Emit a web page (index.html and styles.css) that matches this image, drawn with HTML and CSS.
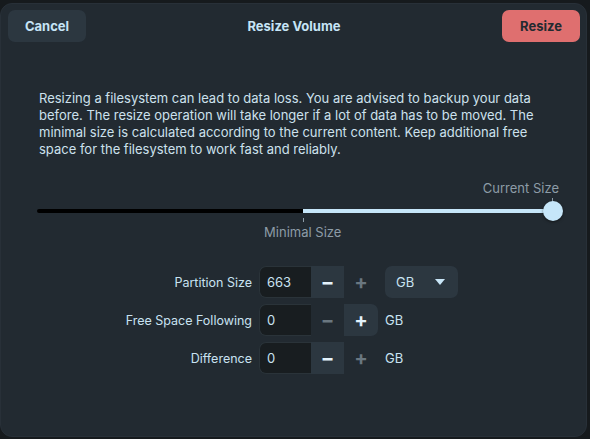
FILE: index.html
```html
<!DOCTYPE html>
<html lang="en">
<head>
  <meta charset="UTF-8" />
  <meta name="viewport" content="width=device-width, initial-scale=1.0"/>
  <title>Resize Volume</title>
  <link rel="stylesheet" href="styles.css">
</head>
<body>
  <div class="dialog">
    <header class="titlebar">
      <button class="btn cancel-btn">Cancel</button>
      <h1>Resize Volume</h1>
      <button class="btn resize-btn">Resize</button>
    </header>

    <p class="warning">Resizing a filesystem can lead to data loss. You are advised to backup your data before. The resize operation will take longer if a lot of data has to be moved. The minimal size is calculated according to the current content. Keep additional free space for the filesystem to work fast and reliably.</p>

    <div class="slider-area">
      <div class="current-label">Current Size</div>
      <div class="slider">
        <div class="track-low" style="width: 51.5%"></div>
        <div class="track-high"></div>
        <span class="tick tick-current"></span>
        <span class="knob"></span>
        <span class="tick tick-min" style="left: 51.5%"></span>
      </div>
      <div class="min-row">
        <span class="min-label" style="left: 51.5%">Minimal Size</span>
      </div>
    </div>

    <div class="size-form">
      <label>Partition Size</label>
      <div class="spin">
        <span class="spin-value">663</span>
        <span class="spin-btn active">&minus;</span>
        <span class="spin-btn">+</span>
      </div>
      <div class="dropdown">
        <span>GB</span>
        <span class="arrow"></span>
      </div>

      <label>Free Space Following</label>
      <div class="spin">
        <span class="spin-value">0</span>
        <span class="spin-btn">&minus;</span>
        <span class="spin-btn active">+</span>
      </div>
      <span class="unit">GB</span>

      <label>Difference</label>
      <div class="spin">
        <span class="spin-value">0</span>
        <span class="spin-btn active">&minus;</span>
        <span class="spin-btn">+</span>
      </div>
      <span class="unit">GB</span>
    </div>
  </div>
</body>
</html>
```

FILE: styles.css
```css
body {
  margin: 0;
  padding: 0;
  background-color: #161a1d;
  font-family: Inter, "Noto Sans", sans-serif;
  color: #c9e2f1;
}
.dialog {
  width: 585px;
  height: 432px;
  margin-top: 3px;
  background-color: #222a31;
  border: 1px solid #283038;
  border-radius: 12px;
  overflow: hidden;
}
.titlebar {
  display: flex;
  align-items: center;
  justify-content: space-between;
  padding: 6px 6px 0 7px;
}
.titlebar h1 {
  margin: 0;
  font-size: 13px;
  font-weight: 700;
  color: #c6e4f6;
}
.btn {
  width: 78px;
  height: 32px;
  border: none;
  border-radius: 7px;
  font-family: Inter, "Noto Sans", sans-serif;
  font-size: 13px;
  font-weight: 700;
  cursor: pointer;
}
.cancel-btn {
  background-color: #2c3740;
  color: #c6e4f6;
}
.resize-btn {
  background-color: #df6f6f;
  color: #232a2f;
}
.warning {
  margin: 48px 0 0 38px;
  width: 510px;
  font-size: 13px;
  line-height: 17px;
  color: #cde1ed;
}
.slider-area {
  margin: 22px 0 0 36px;
  width: 516px;
}
.current-label {
  text-align: right;
  margin-right: -6px;
  font-size: 13px;
  line-height: 16px;
  color: #8d9ca7;
}
.slider {
  position: relative;
  display: flex;
  height: 4px;
  margin-top: 13px;
}
.track-low {
  height: 4px;
  background-color: #000;
  border-radius: 2px 0 0 2px;
}
.track-high {
  flex: 1;
  height: 4px;
  background-color: #c6e6f9;
}
.knob {
  position: absolute;
  right: -10px;
  top: -8px;
  width: 20px;
  height: 20px;
  border-radius: 50%;
  background-color: #c6e6f9;
  box-shadow: 0 1px 3px rgba(0, 0, 0, 0.5);
}
.tick {
  position: absolute;
  width: 1px;
  height: 4px;
  background-color: #8d9ca7;
}
.tick-current {
  right: 0;
  top: -11px;
}
.tick-min {
  top: 9px;
}
.min-row {
  position: relative;
  height: 20px;
  margin-top: 11px;
}
.min-label {
  position: absolute;
  top: 0;
  transform: translateX(-50%);
  font-size: 13px;
  color: #8d9ca7;
  white-space: nowrap;
}
.size-form {
  display: grid;
  grid-template-columns: 251px auto 1fr;
  column-gap: 7px;
  row-gap: 6px;
  align-items: center;
  margin-top: 22px;
}
.size-form label {
  text-align: right;
  font-size: 12.5px;
  color: #c9e2f1;
}
.spin {
  display: flex;
  height: 32px;
}
.spin-value {
  width: 44px;
  padding-left: 7px;
  display: flex;
  align-items: center;
  background-color: #181d20;
  border: 1px solid #2a3339;
  border-right: none;
  border-radius: 7px 0 0 7px;
  font-size: 13px;
  color: #c9e2f1;
}
.spin-btn {
  width: 33px;
  display: flex;
  align-items: center;
  justify-content: center;
  font-size: 20px;
  font-weight: 700;
  color: #6a7780;
}
.spin-btn:last-child {
  width: 34px;
  border-radius: 0 7px 7px 0;
}
.spin-btn.active {
  background-color: #2c3740;
  color: #e4f3fc;
}
.dropdown {
  width: 73px;
  height: 32px;
  display: flex;
  align-items: center;
  justify-content: space-between;
  padding: 0 13px 0 11px;
  box-sizing: border-box;
  background-color: #2c3740;
  border-radius: 7px;
  font-size: 13px;
  color: #c9e2f1;
}
.arrow {
  width: 0;
  height: 0;
  border-left: 5px solid transparent;
  border-right: 5px solid transparent;
  border-top: 6px solid #c9e6f8;
}
.unit {
  font-size: 13px;
  color: #c9e2f1;
}
```
